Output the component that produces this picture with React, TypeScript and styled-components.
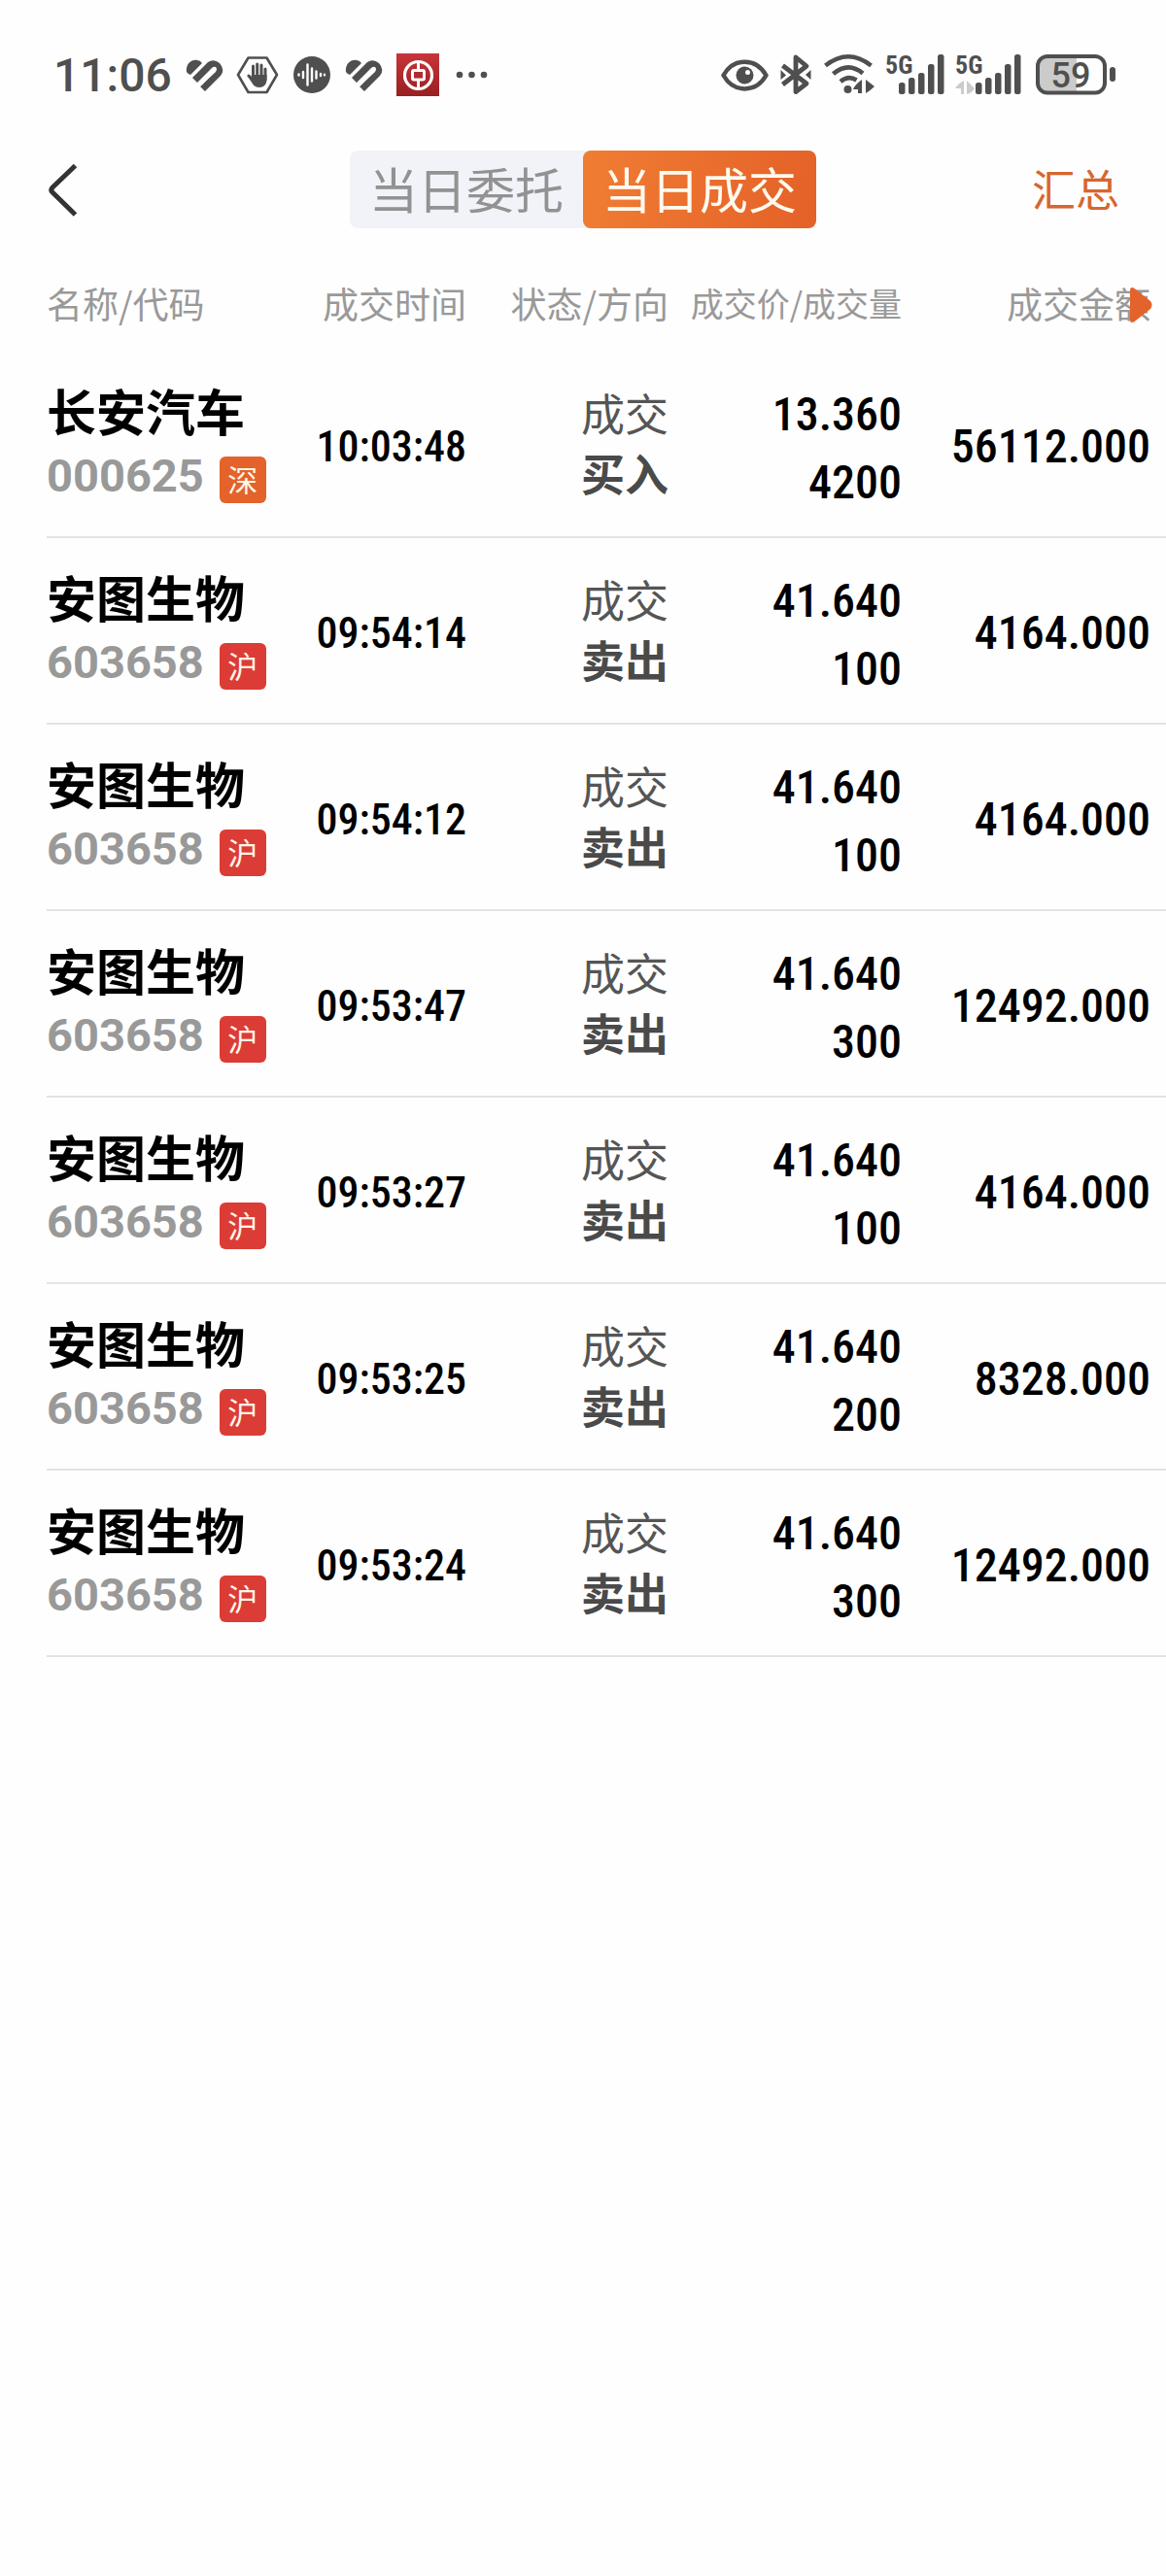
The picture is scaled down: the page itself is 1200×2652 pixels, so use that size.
import React from "react";
import styled, { createGlobalStyle } from "styled-components";

const CJK = `"Noto Sans CJK SC", "Noto Sans", sans-serif`;
const DIGITS = `"Roboto Condensed", Roboto, "Noto Sans CJK SC", sans-serif`;
const INK = "#4f4f4f";

const GlobalStyle = createGlobalStyle`
  *, *::before, *::after { box-sizing: border-box; }
  body { margin: 0; background: #fefefe; font-family: ${CJK}; color: #000; }
  button { border: 0; padding: 0; margin: 0; background: none; font: inherit; cursor: pointer; }
`;

const Page = styled.main`
  display: flex;
  flex-direction: column;
  min-height: 100vh;
`;

const StatusBar = styled.div`
  display: flex;
  justify-content: space-between;
  padding: 54px 51px 0 55px;
  margin-bottom: 55px;
  height: 100px;
`;

const StatusGroup = styled.div<{ $gap: number }>`
  display: flex;
  align-items: center;
  gap: ${(p) => p.$gap}px;
  svg { display: block; flex: none; overflow: visible; }
`;

const Clock = styled.span`
  padding-top: 2px;
  font: 500 48px/46px Roboto, sans-serif;
  color: ${INK};
`;

const TopBar = styled.header`
  display: grid;
  grid-template-columns: 1fr auto 1fr;
  align-items: center;
  padding: 0 48px;
  height: 80px;
`;

const BackButton = styled.button`
  justify-self: start;
  display: flex;
`;

const Tabs = styled.div`
  display: flex;
  height: 80px;
  border-radius: 8px;
  background: #f2f3f8;
`;

const Tab = styled.button<{ $active?: boolean }>`
  padding: 0 20px 4px;
  font-size: 50px;
  line-height: 76px;
  border-radius: 8px;
  color: ${(p) => (p.$active ? "#fffaf0" : "#929292")};
  background: ${(p) => (p.$active ? "linear-gradient(100deg, #f07d33, #e46128)" : "transparent")};
`;

const SummaryButton = styled.button`
  justify-self: end;
  padding-bottom: 2px;
  font-size: 45px;
  line-height: 78px;
  color: #d8652f;
`;

const TableWrap = styled.section`
  padding-left: 48px;
  margin-top: 31px;
`;

const Table = styled.table`
  width: 100%;
  table-layout: fixed;
  border-collapse: separate;
  border-spacing: 0;
`;

const Col = styled.col<{ $w?: number }>`
  width: ${(p) => (p.$w ? `${p.$w}px` : "auto")};
`;

const Head = styled.th<{ $left?: boolean; $last?: boolean; $small?: boolean }>`
  position: relative;
  height: 96px;
  padding: 0 ${(p) => (p.$last ? 16 : 0)}px 4px 0;
  font-size: ${(p) => (p.$small ? 34 : 37)}px;
  font-weight: 400;
  line-height: 48px;
  white-space: nowrap;
  text-align: ${(p) => (p.$left ? "left" : "right")};
  color: #999;
`;

const ScrollHint = styled.svg`
  position: absolute;
  right: 13px;
  top: 29px;
`;

const Cell = styled.td<{ $middle?: boolean; $last?: boolean }>`
  height: 192px;
  padding: ${(p) => (p.$middle ? 6 : 30)}px ${(p) => (p.$last ? 16 : 0)}px 0 0;
  vertical-align: ${(p) => (p.$middle ? "middle" : "top")};
  text-align: right;
  white-space: nowrap;
  border-bottom: 2px solid #e3e3e3;
`;

const StockCell = styled(Cell)`
  text-align: left;
`;

const StatusCell = styled(Cell)`
  padding-top: 32px;
`;

const StockName = styled.div`
  font-size: 51px;
  font-weight: 700;
  line-height: 60px;
`;

const CodeLine = styled.div`
  display: flex;
  align-items: flex-start;
  gap: 16px;
  margin-top: 6px;
`;

const Code = styled.span`
  font: 700 47px/64px Roboto, sans-serif;
  color: #999;
`;

const Badge = styled.span<{ $market: string }>`
  width: 48px;
  height: 48px;
  margin-top: 12px;
  border-radius: 6px;
  font-size: 31px;
  line-height: 46px;
  text-align: center;
  color: #fff6e8;
  background: ${(p) => (p.$market === "深" ? "#e3632a" : "#dc3c36")};
`;

const Time = styled.time`
  font: 500 44px/64px ${DIGITS};
`;

const Status = styled.div<{ $bold?: boolean }>`
  font-size: 45px;
  line-height: 62px;
  font-weight: ${(p) => (p.$bold ? 700 : 400)};
  color: ${(p) => (p.$bold ? "#4a4a4a" : "#555")};
`;

const Figure = styled.div`
  font: 500 48px/70px ${DIGITS};
`;

const IconText = styled.text<{ $size: number; $weight: number; $narrow?: boolean }>`
  font: ${(p) => p.$weight} ${(p) => p.$size}px ${(p) => (p.$narrow ? DIGITS : "Roboto, sans-serif")};
  fill: ${INK};
`;

const HeartIcon = () => (
  <svg width="42" height="46" viewBox="0 0 42 46" fill={INK}>
    <path d="M3 20C2 12 8 7 14 8Q17 8 19 11L7 23Q4 22 3 20Z" />
    <path d="M9 26L25 10Q31 6 37 11Q43 18 38 24L22 40L17 35L33 20Q35 17 33 15Q31 14 29 16L14 31Z" />
    <path d="M17 34L30 20" stroke="#fefefe" strokeWidth="2" />
  </svg>
);

const HandIcon = () => (
  <svg width="44" height="46" viewBox="0 0 44 46" fill="none" stroke={INK} strokeLinecap="round">
    <path d="M12.500 5.500H31.500L42 23L31.500 41H12.500L2 23Z" strokeWidth="2.600" strokeLinejoin="round" />
    <path d="M17.500 14V26M21.700 12V26M26 13V26M30 17V28M13 24L17 29" strokeWidth="3" />
    <path d="M16 23H31.500V28C31.500 33 28 36 24 36C19 36 17 33 14.500 28Z" fill={INK} stroke="none" />
  </svg>
);

const WaveIcon = () => (
  <svg width="42" height="46" viewBox="0 0 42 46">
    <circle cx="22" cy="23" r="19" fill={INK} />
    <path d="M8.500 22.500V23.500M13 20V26M17.500 12.500V33.500M22 16.500V29.500M26.500 19.500V26.500M31 22V24M35 22.700V23.300" stroke="#fefefe" strokeWidth="2.400" strokeLinecap="round" />
  </svg>
);

const BankIcon = () => (
  <svg width="46" height="46" viewBox="0 0 46 46" fill="none" stroke="#fff">
    <defs>
      <linearGradient id="bank" x1="0" y1="0" x2="0" y2="1">
        <stop offset="0" stopColor="#c8353a" />
        <stop offset="1" stopColor="#981f22" />
      </linearGradient>
    </defs>
    <rect x="1" y="1" width="44" height="44" fill="url(#bank)" stroke="none" />
    <circle cx="23.500" cy="23.500" r="14" strokeWidth="3.200" />
    <rect x="17.500" y="18.500" width="12" height="9.500" rx="1.500" strokeWidth="3" />
    <path d="M23.500 9.500V18M23.500 28.500V37.500" strokeWidth="3" />
  </svg>
);

const DotsIcon = () => (
  <svg width="38" height="46" viewBox="0 0 38 46" fill={INK}>
    <circle cx="8" cy="23" r="3.300" />
    <circle cx="20.500" cy="23" r="3.300" />
    <circle cx="33" cy="23" r="3.300" />
  </svg>
);

const EyeIcon = () => (
  <svg width="50" height="46" viewBox="0 0 50 46">
    <path d="M3.500 23.500C14 5 37 5 47.500 23.500C37 42 14 42 3.500 23.500Z" fill="none" stroke={INK} strokeWidth="4.500" strokeLinejoin="round" />
    <circle cx="25.500" cy="23.500" r="9" fill={INK} />
    <circle cx="28.500" cy="20.500" r="2.500" fill="#fefefe" />
  </svg>
);

const BluetoothIcon = () => (
  <svg width="36" height="46" viewBox="0 0 36 46">
    <path d="M4.500 13.500L29 32L18 40.500V5L29 14L4.500 33" fill="none" stroke={INK} strokeWidth="4.800" strokeLinejoin="round" />
    <path d="M2.500 18L8 23.500L2.500 28ZM33.500 18L28 23L33.500 28Z" fill={INK} />
  </svg>
);

const WifiIcon = () => (
  <svg width="54" height="46" viewBox="0 0 54 46">
    <path d="M2.500 13.500Q26 -5 49.500 13.500M10.500 22Q26 9 41 21.500M18 30Q26 23 34.500 28.500" fill="none" stroke={INK} strokeWidth="4.600" />
    <circle cx="25.500" cy="38" r="4" fill={INK} />
    <path d="M40 28V42H36V38H31Q33 33 40 28ZM44 28L53 35Q49 39 44 42Z" fill={INK} />
  </svg>
);

const BARS = [
  [0, 31],
  [10, 26],
  [20, 21],
  [30, 12],
  [40, 2],
];

const SignalIcon = ({ start, arrows }: { start: number; arrows?: boolean }) => (
  <svg width={start + 48} height="46" viewBox={`0 0 ${start + 48} 46`}>
    <IconText $size={26} $weight={700} $narrow x="0" y="22">5G</IconText>
    {BARS.map(([x, y]) => (
      <rect key={x} x={start + x} y={y} width="6.500" height={43 - y} rx="2.500" fill={INK} />
    ))}
    {arrows && <path d="M9 29V43H6V37H0Q3 32 9 29ZM12 29L20 37Q17 42 12 43Z" fill="#cbcbcb" />}
  </svg>
);

const BatteryIcon = () => (
  <svg width="87" height="46" viewBox="0 0 87 46">
    <path d="M46 4H17Q6 4 6 15V30Q6 41 17 41H46Z" fill="#cbcbcb" />
    <rect x="6" y="4" width="69" height="37.500" rx="10" fill="none" stroke={INK} strokeWidth="4" />
    <rect x="80" y="15" width="6" height="15" rx="3" fill={INK} />
    <IconText $size={36} $weight={500} x="40" y="36" textAnchor="middle">59</IconText>
  </svg>
);

type Trade = {
  name: string;
  code: string;
  market: string;
  time: string;
  side: string;
  price: string;
  qty: string;
  amount: string;
};

const antu = (time: string, qty: string, amount: string): Trade => ({
  name: "安图生物",
  code: "603658",
  market: "沪",
  side: "卖出",
  price: "41.640",
  time,
  qty,
  amount,
});

const TRADES: Trade[] = [
  { name: "长安汽车", code: "000625", market: "深", time: "10:03:48", side: "买入", price: "13.360", qty: "4200", amount: "56112.000" },
  antu("09:54:14", "100", "4164.000"),
  antu("09:54:12", "100", "4164.000"),
  antu("09:53:47", "300", "12492.000"),
  antu("09:53:27", "100", "4164.000"),
  antu("09:53:25", "200", "8328.000"),
  antu("09:53:24", "300", "12492.000"),
];

export default function App() {
  return (
    <Page>
      <GlobalStyle />
      <StatusBar>
        <StatusGroup $gap={12}>
          <Clock>11:06</Clock>
          <HeartIcon />
          <HandIcon />
          <WaveIcon />
          <HeartIcon />
          <BankIcon />
          <DotsIcon />
        </StatusGroup>
        <StatusGroup $gap={10}>
          <EyeIcon />
          <BluetoothIcon />
          <WifiIcon />
          <SignalIcon start={14} />
          <SignalIcon start={21} arrows />
          <BatteryIcon />
        </StatusGroup>
      </StatusBar>

      <TopBar>
        <BackButton aria-label="返回">
          <svg width="34" height="60" viewBox="0 0 34 60" fill="none" stroke="#333" strokeWidth="5">
            <path d="M29.500 5.500L6 28Q3.500 30.500 6 33L29.500 56" />
          </svg>
        </BackButton>
        <Tabs role="tablist">
          <Tab role="tab" aria-selected={false}>当日委托</Tab>
          <Tab role="tab" aria-selected $active>当日成交</Tab>
        </Tabs>
        <SummaryButton>汇总</SummaryButton>
      </TopBar>

      <TableWrap>
        <Table>
          <colgroup>
            <Col />
            <Col $w={160} />
            <Col $w={208} />
            <Col $w={240} />
            <Col $w={272} />
          </colgroup>
          <thead>
            <tr>
              <Head scope="col" $left>名称/代码</Head>
              <Head scope="col">成交时间</Head>
              <Head scope="col">状态/方向</Head>
              <Head scope="col" $small>成交价/成交量</Head>
              <Head scope="col" $last>
                成交金额
                <ScrollHint width="26" height="38" viewBox="0 0 26 38" aria-hidden="true">
                  <path d="M2 4Q2 0 6 1.500L23 15Q26 19 23 23L6 36.500Q2 38 2 34Z" fill="#e3632a" />
                </ScrollHint>
              </Head>
            </tr>
          </thead>
          <tbody>
            {TRADES.map((t) => (
              <tr key={t.time}>
                <StockCell>
                  <StockName>{t.name}</StockName>
                  <CodeLine>
                    <Code>{t.code}</Code>
                    <Badge $market={t.market}>{t.market}</Badge>
                  </CodeLine>
                </StockCell>
                <Cell $middle>
                  <Time>{t.time}</Time>
                </Cell>
                <StatusCell>
                  <Status>成交</Status>
                  <Status $bold>{t.side}</Status>
                </StatusCell>
                <Cell>
                  <Figure>{t.price}</Figure>
                  <Figure>{t.qty}</Figure>
                </Cell>
                <Cell $middle $last>
                  <Figure>{t.amount}</Figure>
                </Cell>
              </tr>
            ))}
          </tbody>
        </Table>
      </TableWrap>
    </Page>
  );
}
